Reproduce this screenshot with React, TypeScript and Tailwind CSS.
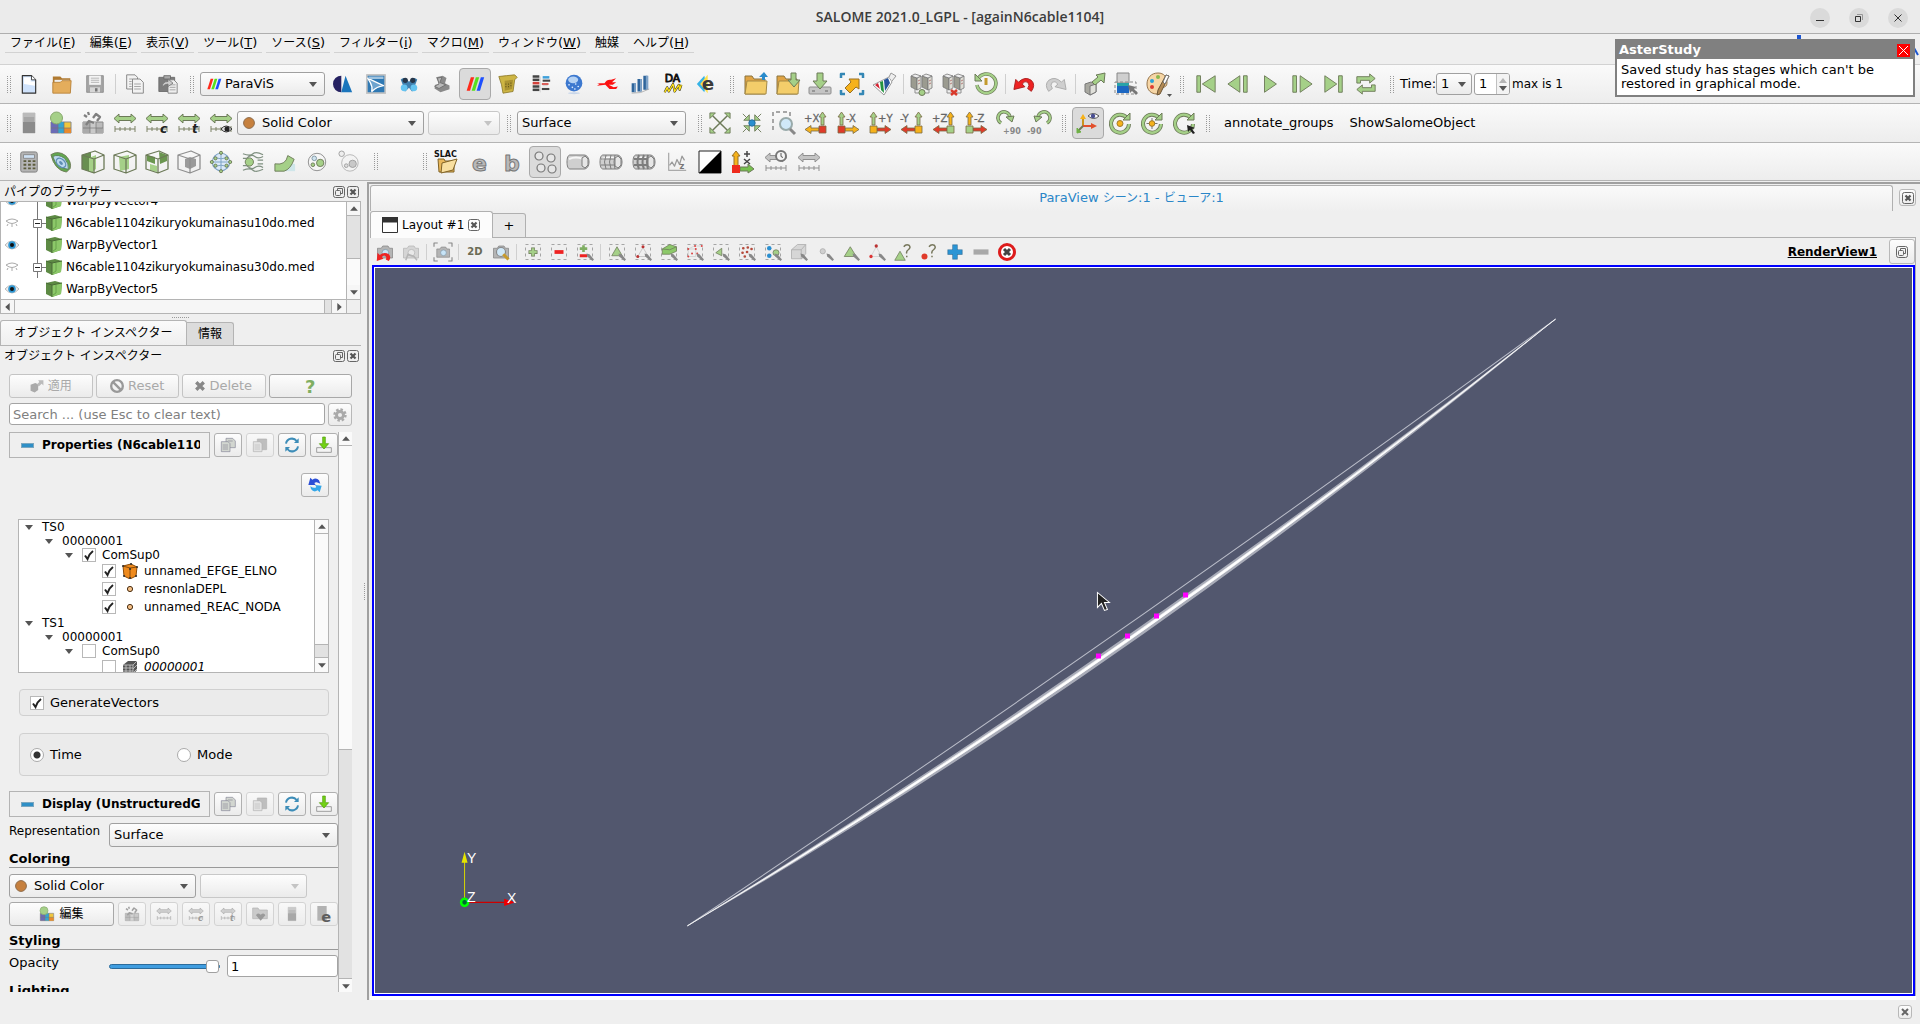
import React, { useState } from "react";

const G = "#a5d088";
const S = "#6c7a58";
const GREY = "#8f8f8f";

type IcoProps = { children: React.ReactNode; size?: string };

const Ico = ({ children, size = "w-6 h-6" }: IcoProps) => (
  <svg viewBox="0 0 24 24" className={`${size} shrink-0 overflow-visible`} fill="none" strokeLinejoin="round">
    {children}
  </svg>
);

const Tool = ({ label, active, children }: { label: string; active?: boolean; children: React.ReactNode }) => (
  <button
    type="button"
    aria-label={label}
    className={`w-8 h-8 shrink-0 flex items-center justify-center rounded-sm border ${
      active ? "bg-[#dbdbdb] border-[#a9a9a9]" : "border-transparent"
    }`}
  >
    {children}
  </button>
);

const Grip = () => (
  <div className="w-4 shrink-0 flex justify-center gap-0.5">
    <div className="h-[17px] border-l border-dotted border-[#999]" />
    <div className="h-[17px] border-l border-dotted border-[#999]" />
  </div>
);

const Sep = () => (
  <div className="w-1.5 shrink-0 flex justify-center">
    <div className="w-px h-5 bg-[#cfcfcf]" />
  </div>
);

const Down = ({ dim }: { dim?: boolean }) => (
  <svg viewBox="0 0 8 5" className="w-2 h-[5px]">
    <path d="M0 0h8L4 5z" fill={dim ? "#c4c4c4" : "#555"} />
  </svg>
);

type ComboProps = { label: string; value: string; width: string; icon?: React.ReactNode; dim?: boolean; pad?: string };

const Combo = ({ label, value, width, icon, dim, pad = "pl-1.5" }: ComboProps) => (
  <div className={`relative ${width}`}>
    <select
      aria-label={label}
      disabled={dim}
      className={`w-full h-6 block appearance-none rounded-[3px] border bg-linear-to-b from-[#fdfdfd] to-[#ebebeb] ${
        dim ? "border-[#c8c8c8]" : "border-[#a0a0a0]"
      } ${icon ? "pl-6" : pad}`}
    >
      <option>{value}</option>
    </select>
    {icon && <span className="absolute left-1.5 top-0 h-6 flex items-center pointer-events-none">{icon}</span>}
    <span className="absolute right-2 top-0 h-6 flex items-center pointer-events-none">
      <Down dim={dim} />
    </span>
  </div>
);

/* ---------- icons ---------- */

const Bars = ({ size }: { size?: string }) => (
  <Ico size={size}>
    <path d="M7 4h4L6 20H2z" fill="#ff2a1a" />
    <path d="M13 4h4l-5 16H8z" fill="#57e01c" />
    <path d="M19 4h4l-5 16h-4z" fill="#1d4fff" />
  </Ico>
);

const Dot = () => (
  <svg viewBox="0 0 12 12" className="w-3 h-3">
    <circle cx="6" cy="6" r="5.4" fill="#c6803e" stroke="#8e6b4a" />
  </svg>
);

const Ruler = ({ mark, grey, eye, clock }: { mark?: string; grey?: boolean; eye?: boolean; clock?: boolean }) => (
  <Ico>
    <path
      d="M1 7.500l5-4.500v2.500h12V3l5 4.500-5 4.500V9.500H6V12z"
      fill={grey ? "#c4c4c4" : G}
      stroke={grey ? GREY : S}
    />
    <path d="M2 21v-6M2 18h20M22 15v6M7 16v4M12 16v4M17 16v4" stroke={grey ? GREY : "#7c8266"} />
    {mark && (
      <text x="15" y="22" fontSize="12" fontStyle="italic" fontWeight="bold" fill={grey ? "#777" : "#222"}>
        {mark}
      </text>
    )}
    {eye && (
      <g>
        <path d="M12 18q5-6 11 0q-6 6-11 0z" fill="#ddd" stroke="#333" />
        <circle cx="18" cy="18" r="2.500" fill="#222" />
      </g>
    )}
    {clock && (
      <g>
        <circle cx="17" cy="6" r="5" fill="#f5f5f5" stroke="#777" strokeWidth="2" />
        <path d="M17 3v3.500l2 1" stroke="#555" />
      </g>
    )}
  </Ico>
);

const Servers = ({ off }: { off?: boolean }) => (
  <Ico>
    {[1, 12].map((x) => (
      <g key={x} stroke="#777" strokeWidth="0.800">
        <path d={`M${x} 4l6 2v12l-6-3z`} fill="#9b9b90" />
        <path d={`M${x + 6} 6l4-2v12l-4 2z`} fill="#deded6" />
        <path d={`M${x} 4l4-2 6 2-4 2z`} fill="#eee" />
        <path d={`M${x + 7} 9l2-1M${x + 7} 12l2-1`} stroke="#a66" />
      </g>
    ))}
    <path d="M5 17v4h14v-4" stroke={GREY} />
    {off ? <path d="M9 18l6 5M15 18l-6 5" stroke="#d8392b" strokeWidth="2.500" /> : <circle cx="12" cy="20.500" r="3" fill={G} stroke={S} />}
  </Ico>
);

const Folder = ({ children }: { children: React.ReactNode }) => (
  <Ico>
    <path d="M1 4h7l2 3h11v15H1z" fill="#e0a445" stroke="#8a7440" />
    <path d="M3 9h20l-1 13H1z" fill="#f3cd6a" stroke="#a58a45" />
    {children}
  </Ico>
);

type AxisProps = { text: string; up: string; box: string; side: string; left?: boolean };

const Axis = ({ text, up, box, side, left }: AxisProps) => (
  <Ico>
    <g transform={left ? "translate(24 0) scale(-1 1)" : undefined} stroke="#7a6a45" strokeWidth="0.800">
      <path d="M4 14V6H2l3.500-5L9 6H7v8z" fill={up} />
      <path d="M9 17h8v-2.500l6 4-6 4V20H9z" fill={side} />
      <path d="M2 15h7v7H2z" fill={box} />
    </g>
    <text x={left ? 0 : 10} y="11" fontSize="10" fill="#666" stroke="#666" strokeWidth="0.300">
      {text}
    </text>
  </Ico>
);

const Rot = ({ text, flip }: { text: string; flip?: boolean }) => (
  <Ico>
    <g transform={flip ? "translate(24 0) scale(-1 1)" : undefined}>
      <path d="M5 12a6 6 0 1 1 9-5" stroke={S} strokeWidth="3.600" />
      <path d="M5 12a6 6 0 1 1 9-5" stroke={G} strokeWidth="2" />
      <path d="M10 6l8-1-2 6z" fill={G} stroke={S} />
    </g>
    <text x={flip ? -1 : 7} y="23" fontSize="8" fontWeight="bold" fill="#888">
      {text}
    </text>
  </Ico>
);

const Cycle = ({ kind }: { kind: "dot" | "plus" | "pick" }) => (
  <Ico>
    <path d="M19 7a9 9 0 1 0 2 6" stroke={S} strokeWidth="4" />
    <path d="M19 7a9 9 0 1 0 2 6" stroke={G} strokeWidth="2.400" />
    <path d="M22 2v7h-7z" fill={G} stroke={S} />
    {kind === "dot" && <circle cx="12" cy="12.500" r="3" fill="#f6b21b" stroke="#a07a2a" />}
    {kind === "plus" && (
      <g>
        <path d="M12 7v11M6.500 12.500h11" stroke="#777" />
        <circle cx="12" cy="12.500" r="2.800" fill="#f6b21b" stroke="#a07a2a" />
      </g>
    )}
    {kind === "pick" && <path d="M15 14l8 3-3 1 3 4-2 1-3-4-2 2z" fill="#222" />}
  </Ico>
);

const Box = ({ children, grey }: { children?: React.ReactNode; grey?: boolean }) => (
  <Ico>
    {children}
    <path
      d="M1 5l13-4 9 4v14l-10 4-12-4zM1 5l12 4 10-4M13 9v14"
      stroke={grey ? GREY : S}
      strokeWidth="1.300"
    />
  </Ico>
);

const Sel = ({ children, bare }: { children?: React.ReactNode; bare?: boolean }) => (
  <Ico size="w-[18px] h-[18px]">
    {!bare && <rect x="2" y="2" width="20" height="20" stroke="#9c9c9c" strokeDasharray="4 4" strokeWidth="1.200" />}
    {children}
  </Ico>
);

const Pick = () => <path d="M14 14l4 1 6 7-2 2-7-6z" fill="#888" />;

const CamBody = ({ grey }: { grey?: boolean }) => (
  <g>
    <path d="M2 7h5l2-3h7l2 3h4v13H2z" fill={grey ? "#d5d5d5" : "#b4b4b4"} stroke={grey ? "#b5b5b5" : "#858585"} />
    <circle cx="12.500" cy="13" r="4.500" fill={grey ? "#e9e9e9" : "#c7e4f7"} stroke={grey ? "#b5b5b5" : "#7f96a5"} />
  </g>
);

const Tank = ({ lines }: { lines: number }) => (
  <Ico>
    <path d="M4 5h14c3 0 5 3 5 7s-2 7-5 7H4c-2 0-3-3-3-7s1-7 3-7z" fill="#cfcfcf" stroke="#7d7d7d" />
    <path d="M3 9q7-3 14 0" stroke="#f6f6f6" strokeWidth="2" />
    <path d="M16 8l3-2 3 3v6l-3 3-3-2z" fill="#e6e6e6" stroke="#7d7d7d" />
    {lines > 0 && <path d="M7 5q-3 7 0 14M12 5q-3 7 0 14M2 9h14M2 15h14M16 5q-2 7 0 14" stroke="#7d7d7d" strokeWidth={lines} />}
  </Ico>
);

const Legend = ({ grey }: { grey?: boolean }) => (
  <Ico>
    <path d="M2 11h20v11H2z" fill={grey ? "#bbb" : "#f0c63c"} stroke="#888" />
    <path d="M2 11h7v11H2z" fill={grey ? "#aaa" : "#6b6bb5"} />
    <path d="M9 11h6v11H9z" fill={grey ? "#c9c9c9" : "#37a4cf"} />
    <path d="M15 17h7v5h-7z" fill={grey ? "#aaa" : "#e98a2c"} />
    <path d="M2 17h20M9 11v11M15 11v11" stroke="#777" strokeWidth="0.700" />
    {grey ? (
      <path d="M5 14l3-4 5 2M12 7l3-4 4 3-3 4M3 4l3 2M7 1l1 3" stroke="#808080" strokeWidth="2.300" />
    ) : (
      <circle cx="7.500" cy="7" r="6" fill={G} stroke="#87a86c" />
    )}
  </Ico>
);

const Scheme = () => (
  <Ico>
    <path d="M6 2h12v20H6z" fill="#a6a6a6" stroke="#c6c6c6" />
    <path d="M6 11h12v11H6z" fill="#8b8b8b" />
    <path d="M6 2h12v4H6z" fill="#bbb" />
  </Ico>
);

const CubeSmall = () => (
  <svg viewBox="0 0 16 16" className="w-4 h-4 shrink-0">
    <path d="M0 2l9-2 7 2-1 11-9 3-6-3z" fill="#5d8a44" />
    <path d="M6 4l10-2-1 11-9 3z" fill="#8cc869" />
    <path d="M0 2l6 2v12M6 4l10-2" stroke="#4a6b38" fill="none" />
    <path d="M10 4v8l-3 2" stroke="#5f9a44" fill="none" strokeWidth="0.800" />
  </svg>
);

const Float = () => (
  <svg viewBox="0 0 12 12" className="w-3 h-3" fill="none" stroke="#666">
    <rect x="0.500" y="0.500" width="11" height="11" rx="2" />
    <rect x="2.500" y="4.500" width="5" height="5" rx="1" />
    <path d="M4.500 4V2.500h5v5H8" />
  </svg>
);

const Close = () => (
  <svg viewBox="0 0 12 12" className="w-3 h-3" fill="none" stroke="#666">
    <rect x="0.500" y="0.500" width="11" height="11" rx="2" />
    <path d="M3.500 3.500l5 5M8.500 3.500l-5 5" strokeWidth="2.200" stroke="#555" />
  </svg>
);

/* ---------- top of the window ---------- */

const menus = [
  ["ファイル", "F"],
  ["編集", "E"],
  ["表示", "V"],
  ["ツール", "T"],
  ["ソース", "S"],
  ["フィルター", "i"],
  ["マクロ", "M"],
  ["ウィンドウ", "W"],
  ["触媒", ""],
  ["ヘルプ", "H"],
];

const TitleBar = () => (
  <header className="relative h-[34px] shrink-0 border-b border-[#aeaeae] bg-[#ebebeb] flex items-center justify-center">
    <h1 className="font-['Open_Sans',sans-serif] font-semibold text-[14px] text-[#3d3d3d]">
      SALOME 2021.0_LGPL - [againN6cable1104]
    </h1>
    <div className="absolute right-3 top-2 flex gap-[19px]">
      <button aria-label="Minimize" className="w-5 h-5 rounded-full bg-[#dadada] flex items-center justify-center">
        <svg viewBox="0 0 10 10" className="w-2.5 h-2.5" stroke="#333"><path d="M1 7.500h8" /></svg>
      </button>
      <button aria-label="Restore" className="w-5 h-5 rounded-full bg-[#dadada] flex items-center justify-center">
        <svg viewBox="0 0 10 10" className="w-2.5 h-2.5" stroke="#333" fill="none">
          <path d="M1.500 3.500h5v5h-5z" />
          <path d="M3 1.500h5.500V7" stroke="#999" />
        </svg>
      </button>
      <button aria-label="Close" className="w-5 h-5 rounded-full bg-[#dadada] flex items-center justify-center">
        <svg viewBox="0 0 10 10" className="w-2.5 h-2.5" stroke="#333"><path d="M1.500 1.500l7 7M8.500 1.500l-7 7" /></svg>
      </button>
    </div>
  </header>
);

const MenuBar = () => (
  <nav className="h-[31px] shrink-0 border-b border-[#d2d2d2] flex gap-1 pl-[5px] items-start">
    {menus.map(([name, key]) => (
      <button key={name} className="h-[19px] px-[5px] border-b border-[#d2d2d2] flex items-center whitespace-nowrap">
        <span className="text-[12px]">{name}</span>
        {key && (
          <span className="text-[13px]">
            (<u>{key}</u>)
          </span>
        )}
      </button>
    ))}
    <svg viewBox="0 0 130 22" className="ml-auto w-[130px] h-[22px]" fill="none">
      <path d="M7 1h4v4H7z" fill="#1c55d0" />
      <path d="M124 14l4 7" stroke="#1c55d0" strokeWidth="2" />
    </svg>
  </nav>
);

const bar = "shrink-0 border-b border-[#b4b4b4] bg-linear-to-b from-[#fafafa] to-[#ededed] flex items-center pl-px";

const FileBar = () => (
  <div className={`${bar} h-[39px]`}>
    <Grip />
    <div className="flex gap-px -ml-1">
      <Tool label="New">
        <Ico size="w-5 h-5">
          <path d="M4 2h11l5 5v16H4z" fill="#cfe2fb" stroke="#333" strokeWidth="1.400" />
          <path d="M6 4h8v5h5v5L6 12z" fill="#fff" />
          <path d="M15 2v5h5" fill="#fff" stroke="#333" />
        </Ico>
      </Tool>
      <Tool label="Open">
        <Ico size="w-5 h-5">
          <path d="M1 3h9l2 2h10v17H1z" fill="#b07a30" />
          <path d="M3 7h18v6H3z" fill="#eee" />
          <path d="M1 10h9l2-2h11l-1 15H1z" fill="#e4ad5c" stroke="#b68036" />
        </Ico>
      </Tool>
      <Tool label="Save">
        <Ico size="w-5 h-5">
          <path d="M2 2h20v20H2z" fill="#a5a5a5" stroke="#8a8a8a" />
          <path d="M5 2h14v11H5z" fill="#f4f4f4" />
          <path d="M7 5h10M7 7.500h10M7 10h10" stroke="#aaa" />
          <path d="M6 16h12v6H6z" fill="#d6d6d6" />
          <path d="M12 17h3v4h-3z" fill="#777" />
        </Ico>
      </Tool>
    </div>
    <div className="w-2 flex justify-center"><div className="w-px h-5 bg-[#cfcfcf]" /></div>
    <div className="flex gap-px">
      <Tool label="Copy">
        <Ico size="w-5 h-5">
          <path d="M2 1h10l3 3v14H2z" fill="#f2f2f2" stroke="#777" />
          <path d="M9 6h9l4 4v13H9z" fill="#f2f2f2" stroke="#777" />
          <path d="M5 6h4M5 9h3M5 12h3M5 15h3M11 12h8M11 15h8M11 18h8" stroke="#999" />
        </Ico>
      </Tool>
      <Tool label="Paste">
        <Ico size="w-5 h-5">
          <path d="M1 4h19v17H1z" fill="#7d7d7d" stroke="#666" />
          <path d="M7 2h8v4H7z" fill="#aaa" stroke="#666" />
          <path d="M12 7h7l4 4v12H12z" fill="#eee" stroke="#777" />
          <path d="M14 13h7M14 16h7M14 19h7" stroke="#999" />
          <path d="M5 16q0-7 7-7V6l6 5-6 4v-3q-4 0-7 4z" fill="#ccc" stroke="#777" />
        </Ico>
      </Tool>
    </div>
    <Grip />
    <Combo label="Module" value="ParaViS" width="w-[125px]" icon={<Bars size="w-4 h-4" />} />
    <div className="flex gap-px ml-0.5">
      <Tool label="Shaper">
        <Ico size="w-5 h-5">
          <path d="M10 2v20A10 10 0 0 1 10 2z" fill="#262262" />
          <path d="M15 2l8 20H10z" fill="#1b75bc" />
        </Ico>
      </Tool>
      <Tool label="Geometry">
        <Ico size="w-5 h-5">
          <rect x="1" y="1" width="22" height="22" fill="#2f79b4" stroke="#c4c4c4" strokeWidth="2" />
          <path d="M2 5q8 4 19 9-8 1-14 7 1-6-2-11z" fill="#6ea4cf" stroke="#fff" strokeWidth="1.500" />
          <path d="M3 3h18v3H3z" fill="#9fc3df" />
        </Ico>
      </Tool>
      <Tool label="Mesh">
        <Ico size="w-[18px] h-[18px]">
          <path d="M1 6q4-4 8 0l3 3 3-3q4-4 8 0l-3 8 2 5-6 3-4-5-5 5-5-3 2-5z" fill="#3f7fae" />
          <circle cx="5.500" cy="17" r="4.500" fill="#64c4f1" />
          <circle cx="18.500" cy="17" r="4.500" fill="#64c4f1" />
          <circle cx="7" cy="7" r="3.500" fill="#27374a" />
          <circle cx="17" cy="7" r="3.500" fill="#27374a" />
        </Ico>
      </Tool>
      <Tool label="Fields">
        <Ico size="w-[18px] h-[18px]">
          <path d="M4 3l9-2 5 3-2 7 6 3v5l-12 4-8-5 1-5 5-1z" fill="#8a8a8a" />
          <path d="M6 4l6-1-3 7 8 3-9 5-6-3 6-3z" fill="#b9b9b9" stroke="#666" />
        </Ico>
      </Tool>
      <Tool label="ParaViS" active><Bars size="w-5 h-5" /></Tool>
      <Tool label="Script">
        <Ico size="w-5 h-5">
          <path d="M1 3q9-1 19-2l3 3-3 3-2 14-12 2q-1-10-5-20z" fill="#cdb544" stroke="#8d7a2a" />
          <path d="M8 8l10-1-1 11-9 2z" fill="#ab9332" />
          <path d="M9 12h1M12 12h1M15 11h1M9 15h1M12 15h1M15 14h1" stroke="#5d5018" strokeWidth="1.500" />
        </Ico>
      </Tool>
      <Tool label="YACS">
        <Ico size="w-5 h-5">
          <path d="M11 3v19M14 8h8M14 14h6" stroke="#c9c9c9" />
          {[3, 7, 11, 15, 19].map((y, i) => <path key={y} d={`M2 ${y}h8`} stroke={i === 2 ? "#d3413b" : "#444"} strokeWidth="3" />)}
          <path d="M14 4h8" stroke="#3fa0da" strokeWidth="3" />
          <path d="M14 8h9" stroke="#444" strokeWidth="2.500" />
          <path d="M13 12h8" stroke="#d3413b" strokeWidth="2" />
          <path d="M13 18h9" stroke="#444" strokeWidth="2.500" />
        </Ico>
      </Tool>
      <Tool label="Network">
        <Ico size="w-5 h-5">
          <circle cx="12" cy="11" r="10" fill="#3c78cf" />
          <ellipse cx="11" cy="7" rx="6" ry="4" fill="#b5d2f3" />
          <path d="M6 13h.1M10 16h.1M14 12h.1M17 15h.1M13 18h.1" stroke="#dcebff" strokeWidth="2" strokeLinecap="round" />
          <ellipse cx="12" cy="23" rx="7" ry="1.200" fill="#c8d6ea" />
        </Ico>
      </Tool>
      <Tool label="Homard">
        <Ico size="w-5 h-5">
          <path d="M0 11l9 0q3-5 8-4l6-2-5 5 5 0-4 3-5 0 6 3 5-1-2 3-8 0-5-5-10 1 3-2z" fill="#fb1111" />
        </Ico>
      </Tool>
      <Tool label="Statistics">
        <Ico size="w-5 h-5">
          <path d="M2 11h5v11H2zM9 6h5v15H9zM16 2h5v17h-5z" fill="#2f659b" />
          <path d="M5 11h2v11H5zM12 6h2v15h-2zM19 2h3v17h-3z" fill="#7fa3c8" />
          <path d="M2 23q11 1 21-5" stroke="#aaa" />
        </Ico>
      </Tool>
      <Tool label="Data">
        <Ico size="w-5 h-5">
          <text x="2" y="10" fontSize="13" fill="#111" stroke="#111">DA</text>
          <path d="M2 22l3-6 2 5 5-9 2 9 5-8 1 6 2-6" stroke="#222" strokeWidth="2.600" />
          <path d="M2 22l3-6 2 5 5-9 2 9 5-8 1 6 2-6" stroke="#ffe21a" strokeWidth="1.600" />
        </Ico>
      </Tool>
      <Tool label="AsterStudy">
        <Ico size="w-5 h-5">
          <path d="M10 2L1 12l9 10 2-10z" fill="#35b3e6" />
          <path d="M14 1L5 12l9 11z" fill="#ffe04a" />
          <text x="7" y="19" fontSize="22" fontWeight="bold" fill="#3a3a3a">e</text>
        </Ico>
      </Tool>
    </div>
    <div className="w-0.5" />
    <Grip />
    <Tool label="Load"><Folder><path d="M18 8V5h-3l5-5 4 5h-3v3z" fill="#2a8bcb" /></Folder></Tool>
    <Tool label="Load state"><Folder><path d="M15 1h5v7h4l-6 7-6-7h3z" fill={G} stroke={S} /></Folder></Tool>
    <Tool label="Save data">
      <Ico>
        <rect x="1" y="15" width="22" height="7" rx="1" fill="#c4c4c4" stroke="#8e8e8e" />
        <path d="M9 1h6v8h4l-7 8-7-8h4z" fill={G} stroke={S} />
        <path d="M4 19h3M17 19h3" stroke="#666" />
      </Ico>
    </Tool>
    <Tool label="Extract">
      <Ico>
        <path d="M1 6V2h4M19 2h4v4M1 18v4h4M23 18v4h-4" stroke="#3487b5" strokeWidth="2.500" />
        <path d="M5 16l6-6-2-3h10v10l-3-2-6 6z" fill="#f6b21b" stroke="#977028" />
      </Ico>
    </Tool>
    <Tool label="Catalyst">
      <Ico>
        <path d="M1 13l16-8 3 5-8 13z" fill="#fff" stroke="#999" />
        <path d="M3 13l3-2 2 6z" fill="#d3202f" />
        <path d="M8 10l3-1 1 12-3-3z" fill="#23923f" />
        <path d="M12 8l4-2 2 5-5 8z" fill="#24539c" />
        <path d="M17 5l2-4 5 3-4 5" fill="#eee" stroke="#999" />
      </Ico>
    </Tool>
    <Sep />
    <Tool label="Connect"><Servers /></Tool>
    <Tool label="Disconnect"><Servers off /></Tool>
    <Tool label="Reload">
      <Ico>
        <path d="M4 7a9.500 9.500 0 1 1-1 6" stroke={S} strokeWidth="3.600" />
        <path d="M4 7a9.500 9.500 0 1 1-1 6" stroke={G} strokeWidth="2.200" />
        <path d="M1 2v7h7z" fill={G} stroke={S} />
        <path d="M12 6v7" stroke="#c39a2c" strokeWidth="3" />
      </Ico>
    </Tool>
    <Sep />
    <Tool label="Undo">
      <Ico size="w-[22px] h-[22px]"><path d="M1 18L3 7l3 3q7-7 14-2 5 5 0 12l-4-3q3-4 0-7-3-2-6 2l3 3z" fill="#ee2222" stroke="#aa1a1a" /></Ico>
    </Tool>
    <Tool label="Redo">
      <Ico size="w-[22px] h-[22px]"><path d="M23 18L21 7l-3 3q-7-7-14-2-5 5 0 12l4-3q-3-4 0-7 3-2 6 2l-3 3z" fill="#cfcfcf" stroke="#a9a9a9" /></Ico>
    </Tool>
    <Sep />
    <Tool label="Apply">
      <Ico>
        <path d="M3 12l6-2 5 2v8l-6 3-5-3z" fill="#a8a8a0" stroke="#777" />
        <path d="M8 14l6-2v8l-6 3z" fill="#e0e0da" stroke="#777" />
        <path d="M10 10l6-5-2-2 9-2-1 10-3-3-6 5z" fill={G} stroke={S} />
      </Ico>
    </Tool>
    <Tool label="Colour by selection">
      <Ico>
        <path d="M3 1h12v10H3z" fill="#cfcfcf" stroke="#888" />
        <path d="M3 11h12v4H3z" fill="#29a3a8" />
        <path d="M3 14h12v7H3z" fill="#1c67c2" />
        <rect x="1" y="10" width="21" height="12" stroke="#888" strokeDasharray="3 2" />
        <path d="M14 13l8 2-2 2 4 4-2 2-4-4-2 2z" fill="#777" />
      </Ico>
    </Tool>
    <Tool label="Palette">
      <Ico>
        <path d="M12 1C5 1 1 6 1 12s4 10 10 10c3 0 2-3 2-5s8 0 8-6S18 1 12 1z" fill="#f6d6a6" stroke="#96744a" />
        <circle cx="6" cy="9" r="2" fill="#29a3d9" /><circle cx="12" cy="5" r="2" fill="#8ab84c" /><circle cx="6" cy="15" r="2" fill="#e03e32" />
        <path d="M20 3l3 1-9 18-3 1 1-5z" fill="#b28a55" stroke="#6d5636" />
        <path d="M20 3l3 1-4 8-2-2z" fill="#fff" stroke="#777" />
        <path d="M21 22h5l-2.500 3z" fill="#555" />
      </Ico>
    </Tool>
    <Grip />
    <Tool label="First"><Ico size="w-[22px] h-[22px]"><path d="M2 3h4v18H2zM22 3v18L8 12z" fill={G} stroke={S} /></Ico></Tool>
    <Tool label="Previous"><Ico size="w-[22px] h-[22px]"><path d="M18 3h4v18h-4zM14 3v18L1 12z" fill={G} stroke={S} /></Ico></Tool>
    <Tool label="Play"><Ico size="w-[22px] h-[22px]"><path d="M6 3v18l13-9z" fill={G} stroke={S} /></Ico></Tool>
    <Tool label="Next"><Ico size="w-[22px] h-[22px]"><path d="M2 3h4v18H2zM10 3v18l13-9z" fill={G} stroke={S} /></Ico></Tool>
    <Tool label="Last"><Ico size="w-[22px] h-[22px]"><path d="M17 3h4v18h-4zM2 3v18l13-9z" fill={G} stroke={S} /></Ico></Tool>
    <Tool label="Loop">
      <Ico size="w-[22px] h-[22px]">
        <path d="M2 11V4h14V1l6 5-6 5V8H6v3z" fill={G} stroke={S} />
        <path d="M22 13v7H8v3l-6-5 6-5v3h10v-3z" fill={G} stroke={S} />
      </Ico>
    </Tool>
    <div className="w-0.5" />
    <Grip />
    <label htmlFor="time" className="w-9 text-[13px]">Time:</label>
    <div className="relative">
      <select id="time" className="w-9 h-[22px] block appearance-none rounded-[3px] border border-[#a0a0a0] pl-1 text-[13px] bg-linear-to-b from-[#fdfdfd] to-[#ebebeb]">
        <option>1</option>
      </select>
      <span className="absolute right-1.5 top-0 h-[22px] flex items-center pointer-events-none"><Down /></span>
    </div>
    <div className="ml-0.5 flex w-9 h-[22px] rounded-[3px] border border-[#a0a0a0] overflow-hidden bg-white">
      <input aria-label="Step" defaultValue="1" className="w-[21px] pl-1 text-[13px]" />
      <div className="flex-1 border-l border-[#c0c0c0] bg-[#f3f3f3] flex flex-col items-center justify-center gap-[3px]">
        <svg viewBox="0 0 8 5" className="w-2 h-[5px]"><path d="M0 5h8L4 0z" fill="#b4b4b4" /></svg>
        <svg viewBox="0 0 8 5" className="w-2 h-[5px]"><path d="M0 0h8L4 5z" fill="#555" /></svg>
      </div>
    </div>
    <span className="pl-0.5 text-[12px]">max is 1</span>
  </div>
);

const ViewBar = () => (
  <div className={`${bar} h-[39px]`}>
    <Grip />
    <div className="flex -ml-1">
      <Tool label="Legend"><Scheme /></Tool>
      <Tool label="Edit map"><Legend /></Tool>
      <Tool label="Unlink map"><Legend grey /></Tool>
      <Tool label="Rescale"><Ruler /></Tool>
      <Tool label="Rescale custom"><Ruler mark="c" /></Tool>
      <Tool label="Rescale time"><Ruler mark="t" /></Tool>
      <Tool label="Rescale visible"><Ruler eye /></Tool>
    </div>
    <Combo label="Colour" value="Solid Color" width="w-[187px]" icon={<Dot />} />
    <div className="w-1" />
    <Combo label="Component" value="" width="w-[72px]" dim />
    <div className="w-px" />
    <Grip />
    <Combo label="Representation" value="Surface" width="w-[169px]" pad="pl-1" />
    <div className="w-1.5" />
    <Grip />
    <div className="flex -ml-1">
      <Tool label="Reset camera">
        <Ico size="w-[22px] h-[22px]">
          <path d="M4 4l16 16M20 4L4 20" stroke={S} strokeWidth="1.600" />
          <path d="M1 1h6L1 7zM23 1v6l-6-6zM1 23v-6l6 6zM23 23h-6l6-6z" fill={G} stroke={S} />
        </Ico>
      </Tool>
      <Tool label="Zoom to data">
        <Ico size="w-[22px] h-[22px]">
          <path d="M2 2l20 20M22 2L2 22" stroke={S} />
          <path d="M9 3v6H3zM15 3v6h6zM9 21v-6H3zM15 21v-6h6z" fill={G} stroke={S} />
          <circle cx="12" cy="12" r="3.500" fill="#2a8fd0" stroke="#256a94" />
        </Ico>
      </Tool>
      <Tool label="Zoom to box">
        <Ico>
          <path d="M1 19V1h17v5" stroke="#8c8c8c" strokeDasharray="4 3" strokeWidth="1.500" />
          <circle cx="14" cy="13" r="6" fill="#cfe8f8" stroke="#9aa" strokeWidth="2" />
          <path d="M18 18l5 5" stroke="#888" strokeWidth="3" />
        </Ico>
      </Tool>
      <Tool label="+X"><Axis text="+X" up={G} box="#df3b2a" side="#f6b21b" left /></Tool>
      <Tool label="-X"><Axis text="-X" up={G} box="#df3b2a" side="#f6b21b" /></Tool>
      <Tool label="+Y"><Axis text="+Y" up={G} box="#f6b21b" side="#df3b2a" /></Tool>
      <Tool label="-Y"><Axis text="-Y" up={G} box="#f6b21b" side="#df3b2a" left /></Tool>
      <Tool label="+Z"><Axis text="+Z" up="#f6b21b" box={G} side="#df3b2a" left /></Tool>
      <Tool label="-Z"><Axis text="-Z" up="#f6b21b" box={G} side="#df3b2a" /></Tool>
      <Tool label="Rotate +90"><Rot text="+90" /></Tool>
      <Tool label="Rotate -90"><Rot text="-90" flip /></Tool>
    </div>
    <Grip />
    <Tool label="Orientation axes" active>
      <Ico>
        <path d="M7 15V7" stroke="#c9951d" strokeWidth="2" /><path d="M4 8l3-5 3 5z" fill="#f6b21b" />
        <path d="M7 15h9" stroke="#e2502d" strokeWidth="2" /><path d="M15 12l6 3-6 3z" fill="#e2502d" />
        <path d="M7 15l-4 4" stroke={S} strokeWidth="2" /><path d="M1 17l4 4-4 1z" fill="#6fb046" stroke="#6fb046" />
        <path d="M12 5q5-5 11 0-5 5-11 0z" fill="#fff" stroke="#555" /><circle cx="17" cy="5" r="2.200" fill="#4a4f92" />
      </Ico>
    </Tool>
    <Tool label="Show center"><Cycle kind="dot" /></Tool>
    <Tool label="Reset center"><Cycle kind="plus" /></Tool>
    <Tool label="Pick center"><Cycle kind="pick" /></Tool>
    <Grip />
    <button className="ml-2 text-[13px]">annotate_groups</button>
    <button className="ml-4 text-[13px]">ShowSalomeObject</button>
  </div>
);

const FilterBar = () => (
  <div className={`${bar} h-[38px]`}>
    <Grip />
    <div className="flex -ml-1">
      <Tool label="Calculator">
        <Ico size="w-[22px] h-[22px]">
          <rect x="3" y="1" width="18" height="22" rx="2" fill="#b4b4b4" stroke="#7a7a7a" />
          <rect x="6" y="4" width="12" height="4" fill="#cfe2f5" stroke="#888" />
          {[11, 15, 19].map((y) => <path key={y} d={`M6 ${y}h3M11 ${y}h3M16 ${y}h3`} stroke="#5c5c3c" strokeWidth="2" />)}
        </Ico>
      </Tool>
      <Tool label="Contour">
        <Ico size="w-[22px] h-[22px]">
          <path d="M1 4q8-5 16 1 7 7 5 14l-4 4Q5 21 1 4z" fill="#62a84e" stroke={S} />
          <path d="M3 6q6-3 13 2 5 6 4 12Q7 19 3 6z" fill="#bcd9ef" stroke="#5b7f58" />
          <ellipse cx="12" cy="13" rx="6" ry="4" transform="rotate(45 12 13)" stroke="#5f8fb4" strokeWidth="1.400" />
          <ellipse cx="12" cy="13" rx="2.500" ry="1.500" transform="rotate(45 12 13)" fill="#5f8fb4" />
        </Ico>
      </Tool>
      <Tool label="Clip"><Box><path d="M1 5l9-3v16l3 5-12-4z" fill="#688f50" /><path d="M8 8l7-3v14l-4 3-3-1z" fill={G} /></Box></Tool>
      <Tool label="Slice"><Box><path d="M6 7l10-2v14l-9 2z" fill={G} /></Box></Tool>
      <Tool label="Threshold"><Box><path d="M2 5l8 2v7l-8-3zM14 2l8 3v6l-7 3z" fill="#6a964f" /><path d="M5 14l7 2v6l-7-2z" fill={G} /></Box></Tool>
      <Tool label="Extract subset"><Box grey><path d="M8 9l5-2 6 2v7l-6 3-5-2z" fill="#9a9a9a" /></Box></Tool>
      <Tool label="Glyph">
        <Ico size="w-[22px] h-[22px]">
          <circle cx="12" cy="12" r="9.500" fill="#dbe9f7" stroke="#7aa0c4" strokeWidth="1.200" />
          <path d="M3 12h18M12 2v20M5 6q7 5 14 0M5 18q7-5 14 0" stroke="#7aa0c4" />
          {[[12, 2], [12, 22], [2, 12], [22, 12], [6, 8], [18, 8], [6, 16], [18, 16]].map(([x, y]) => (
            <circle key={`${x}-${y}`} cx={x} cy={y} r="1.700" fill={G} stroke={S} />
          ))}
        </Ico>
      </Tool>
      <Tool label="Streamlines">
        <Ico size="w-[22px] h-[22px]">
          <path d="M1 3q8 3 11 0t11 1M1 8h4q5-5 9-2t9 0M1 16h4q5 5 9 2t9 0M1 21q8-3 11 0t11-1M17 10h6M17 14h6" stroke="#7f9080" strokeWidth="1.300" />
          <circle cx="8" cy="12" r="4.500" fill={G} stroke={S} />
        </Ico>
      </Tool>
      <Tool label="Warp">
        <Ico size="w-[22px] h-[22px]">
          <path d="M1 14h22v8H1z" fill="#cfe6ea" />
          <path d="M1 14q12 2 14-9l7 4Q18 20 11 22H1z" fill={G} stroke={S} />
        </Ico>
      </Tool>
      <Tool label="Group">
        <Ico size="w-[22px] h-[22px]">
          <circle cx="12" cy="12" r="9.500" fill="#f6f6f6" stroke="#8a8a8a" />
          <circle cx="15.500" cy="13" r="4" fill={G} stroke={S} />
          <circle cx="9" cy="8" r="2.500" fill="#cfe3ee" stroke="#7e95a3" /><circle cx="7.500" cy="15" r="2" fill={G} stroke={S} />
        </Ico>
      </Tool>
      <Tool label="Extract block">
        <Ico size="w-[22px] h-[22px]">
          <circle cx="13" cy="13" r="9" fill="#f3f3f3" stroke="#b5b5b5" />
          <circle cx="16" cy="14" r="4" fill="#c8c8c8" stroke="#9d9d9d" />
          <circle cx="4" cy="3" r="3" fill="#eee" stroke="#9d9d9d" /><circle cx="9" cy="16" r="2" fill="#ddd" stroke="#9d9d9d" />
        </Ico>
      </Tool>
    </div>
    <div className="w-[3px]" />
    <Grip />
    <div className="w-[33px]" />
    <Grip />
    <div className="flex gap-px -ml-[3px]">
      <Tool label="SLAC">
        <Ico>
          <path d="M4 9h6l1 2h9v11H5z" fill="#e8b75b" stroke="#806225" />
          <path d="M8 13l15-4-4 11-12 3z" fill="#f8dfa0" stroke="#806225" />
          <text x="0" y="7" fontSize="8" fontWeight="bold" fill="#111">SLAC</text>
        </Ico>
      </Tool>
      <Tool label="E field"><Ico><text x="5" y="21" fontSize="22" fontWeight="bold" fill="#b9b9b9" stroke="#777">e</text></Ico></Tool>
      <Tool label="B field"><Ico><text x="4" y="21" fontSize="22" fontWeight="bold" fill="#b9b9b9" stroke="#777">b</text></Ico></Tool>
      <Tool label="Particles" active>
        <Ico>
          {[[6, 6], [18, 8], [8, 18], [19, 19]].map(([x, y]) => <circle key={x} cx={x} cy={y} r="4" fill="#e6e6e6" stroke="#777" strokeWidth="1.200" />)}
        </Ico>
      </Tool>
      <Tool label="Solid mesh"><Tank lines={0} /></Tool>
      <Tool label="Wireframe mesh"><Tank lines={1} /></Tool>
      <Tool label="Back mesh"><Tank lines={2} /></Tool>
      <Tool label="Plot">
        <Ico size="w-5 h-5">
          <path d="M2 1v21h21" stroke="#aaa" strokeWidth="1.500" />
          <path d="M3 16l3-4 3 5 3-8 3 6 3-10 3 5" stroke="#999" strokeWidth="1.500" />
          <text x="15" y="20" fontSize="10" fontWeight="bold" fill="#777">z</text>
        </Ico>
      </Tool>
      <Tool label="Background">
        <Ico>
          <path d="M1 1h22v22H1z" fill="#fff" stroke="#222" />
          <path d="M23 1v22H1z" fill="#000" />
        </Ico>
      </Tool>
      <Tool label="Align">
        <Ico>
          <path d="M3 16V6H1l4-5 4 5H7v10z" fill="#f6b21b" stroke="#977028" />
          <path d="M9 17h8v-3l6 5-6 4v-2H9z" fill="#76c04e" stroke={S} />
          <path d="M1 15h8v8H1z" fill="#ee2a1c" />
          <path d="M13 4h6M16 1v6M13 9l6 5M19 9l-6 5" stroke="#444" strokeWidth="1.500" />
        </Ico>
      </Tool>
      <Tool label="Range over time"><Ruler grey clock /></Tool>
      <Tool label="Range"><Ruler grey /></Tool>
    </div>
  </div>
);

const Popup = () => (
  <div className="absolute right-[5px] top-[39px] w-[300px] border-2 border-[#808080] bg-white" role="alert">
    <div className="h-[18px] bg-[#808080] flex items-center justify-between pl-0.5 pr-[3px] text-white font-bold text-[13px]">
      AsterStudy
      <button aria-label="Dismiss" className="w-[13px] h-[13px] bg-[#f00]">
        <svg viewBox="0 0 13 13" className="w-full h-full" stroke="#fff"><path d="M2 2l9 9M11 2l-9 9" /></svg>
      </button>
    </div>
    <p className="px-1 pt-1 pb-1 text-[13px] leading-[14px] h-9">Saved study has stages which can't be restored in graphical mode.</p>
  </div>
);

/* ---------- left docks ---------- */

const DockTitle = ({ children }: { children: React.ReactNode }) => (
  <div className="h-[18px] shrink-0 flex items-center justify-between pl-1 pr-0.5">
    <h2 className="text-[12px]">{children}</h2>
    <div className="flex gap-0.5">
      <button aria-label="Float" className="flex"><Float /></button>
      <button aria-label="Close dock" className="flex"><Close /></button>
    </div>
  </div>
);

const Arrow = ({ dir }: { dir: "up" | "down" | "left" | "right" }) => {
  const d = { up: "M1 6h7L4.500 2z", down: "M1 3h7L4.500 7z", left: "M6 1v7L2 4.500z", right: "M3 1v7l4-3.500z" }[dir];
  return (
    <svg viewBox="0 0 9 9" className="w-2.5 h-2.5"><path d={d} fill="#555" /></svg>
  );
};

const Eye = ({ on }: { on: boolean }) => (
  <svg viewBox="0 0 14 10" className="w-3.5 h-2.5 shrink-0" fill="none">
    {on ? (
      <g>
        <path d="M0 5q7-8 14 0-7 8-14 0z" fill="#eee" stroke="#aaa" strokeWidth="0.800" />
        <circle cx="7" cy="5" r="3.800" fill="#2b95d2" />
        <circle cx="7" cy="5" r="2" fill="#111" />
      </g>
    ) : (
      <path d="M1 3q6 5 12 0M3 6l-1 2M7 6v3M11 6l1 2M1 3q6-4 12 0" stroke="#aaa" />
    )}
  </svg>
);

const pipeline = [
  { name: "WarpByVector4", on: true, child: true },
  { name: "N6cable1104zikuryokumainasu10do.med", on: false, child: false },
  { name: "WarpByVector1", on: true, child: true },
  { name: "N6cable1104zikuryokumainasu30do.med", on: false, child: false },
  { name: "WarpByVector5", on: true, child: true },
];

const PipelineBrowser = () => (
  <section className="shrink-0 border border-[#b4b4b4] bg-white">
    <div className="flex h-[97px]">
      <ul className="flex-1 overflow-hidden">
        {pipeline.map((p, i) => (
          <li key={p.name} className="h-[22px] flex items-center pl-1 first:-mt-3">
            <Eye on={p.on} />
            <svg viewBox="0 0 26 22" className="w-[26px] h-[22px] shrink-0 ml-px" fill="none" stroke="#777">
              {i < 4 && <path d="M17.500 0v22" />}
              {!p.child && <path d="M22 11.500h4" />}
              {!p.child && <path d="M13.500 7.500h8v8h-8z" fill="#fff" />}
              {!p.child && <path d="M15 11.500h5" stroke="#222" />}
            </svg>
            <CubeSmall />
            <span className="pl-1 text-[12px]">{p.name}</span>
          </li>
        ))}
      </ul>
      <div className="w-3.5 border-l border-[#b4b4b4] bg-[#e2e2e2] flex flex-col">
        <button aria-label="Scroll up" className="h-3.5 bg-[#f6f6f6] border-b border-[#b4b4b4] flex items-center justify-center"><Arrow dir="up" /></button>
        <div className="flex-1" />
        <div className="h-[27px] border-t border-[#b4b4b4] bg-[#fafafa]" />
        <button aria-label="Scroll down" className="h-3.5 bg-[#f6f6f6] flex items-center justify-center"><Arrow dir="down" /></button>
      </div>
    </div>
    <div className="h-3.5 border-t border-[#b4b4b4] bg-[#f6f6f6] flex">
      <button aria-label="Scroll left" className="w-3.5 border-r border-[#b4b4b4] flex items-center justify-center"><Arrow dir="left" /></button>
      <div className="flex-1" />
      <div className="w-2 border-x border-[#b4b4b4] bg-[#e2e2e2]" />
      <button aria-label="Scroll right" className="w-3.5 flex items-center justify-center"><Arrow dir="right" /></button>
      <div className="w-3.5 border-l border-[#b4b4b4] bg-[#efefef]" />
    </div>
  </section>
);

const btn = "rounded-[3px] border bg-linear-to-b from-[#fdfdfd] to-[#ebebeb] flex items-center justify-center gap-1";

const Mini = ({ label, dim, children }: { label: string; dim?: boolean; children: React.ReactNode }) => (
  <button
    aria-label={label}
    disabled={dim}
    className={`${btn} w-7 h-6 shrink-0 [&>svg]:w-4 [&>svg]:h-4 ${dim ? "border-[#c8c8c8] opacity-70" : "border-[#b0b0b0]"}`}
  >
    {children}
  </button>
);

const SectionHead = ({ title }: { title: string }) => (
  <div className="flex items-center gap-1">
    <button className="flex-1 min-w-0 h-[26px] border border-[#b4b4b4] flex items-center pl-[11px] pr-[9px]">
      <span className="w-[13px] h-[5px] shrink-0 bg-[#2f8fc6] border border-[#7aa6bf]" />
      <span className="pl-2 font-bold text-[12px] whitespace-nowrap overflow-hidden">{title}</span>
    </button>
    <Mini label="Copy properties">
      <Ico>
        <path d="M9 2h10l4 4v10H9z" fill="#d2d6d0" stroke="#889" />
        <path d="M2 7h10l3 3v12H2z" fill="#d2d6d0" stroke="#889" />
        <path d="M4 12h8M4 15h8M4 18h8M12 6h7" stroke="#889" />
      </Ico>
    </Mini>
    <Mini label="Paste properties" dim>
      <Ico>
        <path d="M8 3h14v16H8z" fill="#aaa" stroke="#999" />
        <path d="M2 7h10l3 3v12H2z" fill="#ddd" stroke="#999" />
        <path d="M4 12h8M4 15h8M4 18h8" stroke="#aaa" />
      </Ico>
    </Mini>
    <Mini label="Restore defaults">
      <Ico>
        <path d="M3 10a9 9 0 0 1 16-4M21 14a9 9 0 0 1-16 4" stroke="#3d8db8" strokeWidth="3" />
        <path d="M22 2v7h-7zM2 22v-7h7z" fill="#3d8db8" />
      </Ico>
    </Mini>
    <Mini label="Save defaults">
      <Ico>
        <path d="M1 16h22v7H1z" fill="#f4f4f4" stroke="#777" />
        <path d="M10 0h4v10h5l-7 8-7-8h5z" fill="#73d216" stroke="#4e9a06" />
      </Ico>
    </Mini>
  </div>
);

const Check = ({ id, on }: { id: string; on?: boolean }) => (
  <span className="relative w-3.5 h-3.5 shrink-0">
    <input id={id} type="checkbox" defaultChecked={on} className="peer block w-3.5 h-3.5 appearance-none border border-[#b8b8b8] bg-white" />
    <svg viewBox="0 0 14 14" className="absolute inset-0 w-3.5 h-3.5 hidden peer-checked:block pointer-events-none">
      <path d="M3 7.500l2.500 3.500Q7 6 11 3" stroke="#222" strokeWidth="2" fill="none" />
    </svg>
  </span>
);

const Point = () => (
  <svg viewBox="0 0 16 16" className="w-4 h-4 shrink-0"><circle cx="8" cy="8" r="2.600" fill="#f4c088" stroke="#4a2d10" /></svg>
);

const Cell = () => (
  <svg viewBox="0 0 16 16" className="w-4 h-4 shrink-0">
    <path d="M1 3l8-2 6 3-1 9-6 3-6-3z" fill="#ee8a1d" stroke="#8a4b08" />
    <path d="M8 5v11M1 3l7 2 7-1" stroke="#8a4b08" fill="none" />
    <path d="M1 3h.1M9 1h.1M15 4h.1M14 13h.1M8 15h.1M2 13h.1M8 6h.1" stroke="#333" strokeWidth="2" strokeLinecap="round" />
  </svg>
);

const MeshGrid = () => (
  <svg viewBox="0 0 16 16" className="w-4 h-4 shrink-0">
    <path d="M1 6l5-4h9v9l-4 5H1z" fill="#555" />
    <path d="M1 9h10M1 12h10M4 6v10M8 6v10M11 6v10M1 6h10l4-4M11 10l4-4M11 14l4-4" stroke="#ccc" fill="none" strokeWidth="0.800" />
  </svg>
);

type Node = { text: string; depth: string; check?: boolean; on?: boolean; leaf?: boolean; icon?: React.ReactNode; italic?: boolean };

const fields: Node[] = [
  { text: "TS0", depth: "pl-1.5" },
  { text: "00000001", depth: "pl-[26px]" },
  { text: "ComSup0", depth: "pl-[46px]", check: true, on: true },
  { text: "unnamed_EFGE_ELNO", depth: "pl-[83px]", check: true, on: true, leaf: true, icon: <Cell /> },
  { text: "resnonlaDEPL", depth: "pl-[83px]", check: true, on: true, leaf: true, icon: <Point /> },
  { text: "unnamed_REAC_NODA", depth: "pl-[83px]", check: true, on: true, leaf: true, icon: <Point /> },
  { text: "TS1", depth: "pl-1.5" },
  { text: "00000001", depth: "pl-[26px]" },
  { text: "ComSup0", depth: "pl-[46px]", check: true },
  { text: "00000001", depth: "pl-[83px]", check: true, leaf: true, icon: <MeshGrid />, italic: true },
];

const FieldTree = () => (
  <div className="ml-[9px] mr-[9px] h-[154px] border border-[#b4b4b4] bg-white flex">
    <ul className="flex-1 overflow-hidden text-[12px]">
      {fields.map((n, i) => (
        <li key={i} className={`flex items-center ${n.leaf ? "h-[18px]" : "h-3.5"} ${n.depth}`}>
          {!n.leaf && <span className="pr-[9px]"><Down /></span>}
          {n.check && <Check id={`field-${i}`} on={n.on} />}
          {n.icon && <span className="pl-1.5">{n.icon}</span>}
          <label htmlFor={`field-${i}`} className={`${n.check ? "pl-1.5" : ""} ${n.italic ? "italic" : ""}`}>{n.text}</label>
        </li>
      ))}
    </ul>
    <div className="w-3.5 border-l border-[#b4b4b4] bg-[#fafafa] flex flex-col">
      <button aria-label="Scroll up" className="h-3.5 border-b border-[#b4b4b4] flex items-center justify-center"><Arrow dir="up" /></button>
      <div className="flex-1" />
      <div className="h-3.5 border-y border-[#b4b4b4] bg-[#e2e2e2]" />
      <button aria-label="Scroll down" className="h-3.5 flex items-center justify-center"><Arrow dir="down" /></button>
    </div>
  </div>
);

const Radio = ({ label, on }: { label: string; on?: boolean }) => (
  <label className="w-[147px] flex items-center gap-1.5 text-[13px]">
    <input
      type="radio"
      name="mode"
      defaultChecked={on}
      className="appearance-none w-3.5 h-3.5 rounded-full border border-[#aaa] bg-white checked:bg-[radial-gradient(#333_3px,#fff_4px)]"
    />
    {label}
  </label>
);

const Inspector = () => {
  const [opacity, setOpacity] = useState("1");
  return (
    <div className="flex-1 min-h-0 flex flex-col pl-[9px] pr-[9px] pt-[9px]">
      <div className="grid grid-cols-4 gap-[3px] shrink-0 text-[#a9a9a9]">
        <button disabled className={`${btn} h-6 border-[#c4c4c4] text-[12px]`}>
          <Ico size="w-3.5 h-3.5"><path d="M1 10l8-3 5 2v10l-6 4-7-3z" fill="#aaa" /><path d="M12 9l4-4-2-3h9v9l-3-3-5 5z" fill="#bbb" /></Ico>
          適用
        </button>
        <button disabled className={`${btn} h-6 border-[#c4c4c4] text-[13px]`}>
          <Ico size="w-3.5 h-3.5"><circle cx="12" cy="12" r="10" stroke="#999" strokeWidth="4" /><path d="M5 5l14 14" stroke="#999" strokeWidth="4" /></Ico>
          Reset
        </button>
        <button disabled className={`${btn} h-6 border-[#c4c4c4] text-[13px]`}>
          <Ico size="w-2.5 h-2.5"><path d="M3 3l18 18M21 3L3 21" stroke="#888" strokeWidth="8" /></Ico>
          Delete
        </button>
        <button aria-label="Help" className={`${btn} h-6 border-[#a8a8a8] text-[18px] font-bold text-[#7fae62]`}>?</button>
      </div>
      <div className="flex gap-[3px] mt-[5px] shrink-0">
        <input aria-label="Search" placeholder="Search ... (use Esc to clear text)" className="flex-1 min-w-0 h-[22px] rounded-[3px] border border-[#a4a4a4] bg-white pl-[3px] text-[13px] placeholder:text-[#808080]" />
        <button aria-label="Advanced" className={`${btn} w-6 h-[23px] border-[#b8b8b8]`}>
          <Ico size="w-3.5 h-3.5">
            <circle cx="12" cy="12" r="9" stroke="#aaa" strokeWidth="5" strokeDasharray="4 3" />
            <circle cx="12" cy="12" r="6" stroke="#aaa" strokeWidth="5" fill="#eee" />
          </Ico>
        </button>
      </div>
      <div className="flex mt-1.5 flex-1 min-h-0">
        <div className="flex-1 min-w-0 overflow-hidden">
          <SectionHead title="Properties (N6cable1104zikuryoku)" />
          <div className="flex justify-end pr-[9px] mt-[15px] mb-[22px]">
            <Mini label="Reload">
              <Ico>
                <path d="M2 12L5 1l3 3q6-4 10 1l2 5q-6-4-9-1l2 3z" fill="#2b4fd6" />
                <path d="M22 13l-3 10-3-3q-6 4-10-2l-1-4q6 4 9 1l-2-3z" fill="#34a7e8" />
              </Ico>
            </Mini>
          </div>
          <FieldTree />
          <div className="ml-2.5 mr-[9px] mt-4 h-[27px] rounded-sm border border-[#d0d0d0] bg-[#ebebeb] flex items-center pl-2.5 text-[13px]">
            <Check id="vectors" on />
            <label htmlFor="vectors" className="pl-1.5">GenerateVectors</label>
          </div>
          <div className="ml-2.5 mr-[9px] mt-[17px] mb-[15px] h-[43px] rounded-sm border border-[#d0d0d0] bg-[#ebebeb] flex items-center pl-2.5">
            <Radio label="Time" on />
            <Radio label="Mode" />
          </div>
          <SectionHead title="Display (UnstructuredGridRepresentation)" />
          <div className="flex mt-1.5">
            <span className="w-[100px] shrink-0 text-[12px] leading-4">Representation</span>
            <Combo label="Display representation" value="Surface" width="flex-1" pad="pl-1" />
          </div>
          <h3 className="mt-1 font-bold text-[13px] leading-4 border-b border-[#999]">Coloring</h3>
          <div className="flex gap-1 mt-1.5">
            <Combo label="Color by" value="Solid Color" width="w-[187px]" icon={<Dot />} />
            <Combo label="Color component" value="" width="w-[107px]" dim />
          </div>
          <div className="flex gap-1 mt-1">
            <button className={`${btn} h-6 flex-1 border-[#a8a8a8] text-[12px] [&>svg]:w-4 [&>svg]:h-4`}><Legend />編集</button>
            <Mini label="Edit" dim><Legend grey /></Mini>
            <Mini label="Rescale" dim><Ruler grey /></Mini>
            <Mini label="Rescale custom" dim><Ruler grey mark="c" /></Mini>
            <Mini label="Rescale time" dim><Ruler grey mark="t" /></Mini>
            <Mini label="Presets" dim>
              <Ico><path d="M1 3h8l2 3h12v13H1z" fill="#bbb" stroke="#999" /><path d="M13 22l-7-8q2-5 7-1 5-4 7 1z" fill="#777" /></Ico>
            </Mini>
            <Mini label="Scheme" dim><Scheme /></Mini>
            <Mini label="Edit scheme" dim>
              <Ico><path d="M2 0h14v22H2z" fill="#999" /><text x="8" y="24" fontSize="22" fontWeight="bold" fill="#222">e</text></Ico>
            </Mini>
          </div>
          <h3 className="mt-[7px] font-bold text-[13px] leading-4 border-b border-[#999]">Styling</h3>
          <div className="flex mt-[5px]">
            <label htmlFor="opacity" className="w-[100px] shrink-0 text-[13px] leading-4">Opacity</label>
            <input
              id="opacity"
              type="range"
              min="0"
              max="1"
              step="0.01"
              value={opacity}
              onChange={(e) => setOpacity(e.target.value)}
              className="w-[111px] h-[22px] appearance-none bg-transparent [&::-webkit-slider-runnable-track]:h-[5px] [&::-webkit-slider-runnable-track]:rounded-sm [&::-webkit-slider-runnable-track]:bg-[#3f9de0] [&::-webkit-slider-runnable-track]:border [&::-webkit-slider-runnable-track]:border-[#2c6c9c] [&::-webkit-slider-thumb]:appearance-none [&::-webkit-slider-thumb]:w-[13px] [&::-webkit-slider-thumb]:h-[13px] [&::-webkit-slider-thumb]:-mt-[5px] [&::-webkit-slider-thumb]:rounded-[3px] [&::-webkit-slider-thumb]:border [&::-webkit-slider-thumb]:border-[#a0a0a0] [&::-webkit-slider-thumb]:bg-white"
            />
            <input aria-label="Opacity value" value={opacity} onChange={(e) => setOpacity(e.target.value)} className="ml-[7px] flex-1 min-w-0 h-[22px] rounded-[3px] border border-[#a4a4a4] bg-white pl-[3px] text-[13px]" />
          </div>
          <h3 className="mt-1.5 font-bold text-[13px] leading-4">Lighting</h3>
        </div>
        <div className="w-3.5 shrink-0 border-l border-[#b4b4b4] bg-[#e2e2e2] flex flex-col">
          <button aria-label="Scroll up" className="h-3.5 bg-[#fafafa] border-b border-[#b4b4b4] flex items-center justify-center"><Arrow dir="up" /></button>
          <div className="flex-[57] bg-[#fafafa] border-b border-[#b4b4b4]" />
          <div className="flex-[43]" />
          <button aria-label="Scroll down" className="h-3.5 bg-[#fafafa] border-t border-[#b4b4b4] flex items-center justify-center"><Arrow dir="down" /></button>
        </div>
      </div>
    </div>
  );
};

const LeftDock = () => (
  <aside className="w-[361px] shrink-0 flex flex-col pt-px">
    <DockTitle>パイプのブラウザー</DockTitle>
    <PipelineBrowser />
    <div className="h-1.5 shrink-0 flex items-center justify-center"><div className="w-[17px] border-t border-dotted border-[#999]" /></div>
    <div className="flex items-end border-b border-[#b4b4b4] shrink-0 text-[12px]">
      <button className="w-[187px] h-[25px] rounded-t-[3px] border border-b-0 border-[#b4b4b4] bg-linear-to-b from-[#fafafa] to-[#efefef]">オブジェクト インスペクター</button>
      <button className="w-[47px] h-[23px] rounded-tr-[3px] border border-b-0 border-l-0 border-[#b4b4b4] bg-[#dcdcdc]">情報</button>
    </div>
    <div className="h-px shrink-0" />
    <DockTitle>オブジェクト インスペクター</DockTitle>
    <Inspector />
    <div className="h-2 shrink-0" />
  </aside>
);

/* ---------- 3D view ---------- */

const ViewTools = () => (
  <div className="h-[27px] shrink-0 flex items-center">
    <div className="flex-1 flex items-center [&>svg]:mx-1 [&>i]:ml-0.5 [&>i]:mr-[3px]">
      <Ico size="w-[18px] h-[18px]"><CamBody /><path d="M1 24l1-11 3 3q6-5 12-1 4 4 0 9l-4-2q2-3-1-5-3-1-4 2l2 2z" fill="#ee2222" /></Ico>
      <Ico size="w-[18px] h-[18px]"><CamBody grey /><path d="M5 23l3-8 8 3 4 5" stroke="#b5b5b5" strokeWidth="2" /></Ico>
      <i className="w-px h-4 bg-[#cfcfcf]" />
      <Ico size="w-[18px] h-[18px]"><g transform="translate(2 2) scale(.85)"><CamBody /></g><path d="M0 5V0h5M19 0h5v5M0 19v5h5M24 19v5h-5" stroke="#888" strokeWidth="1.500" /></Ico>
      <i className="w-px h-4 bg-[#cfcfcf]" />
      <button className="w-[26px] text-center text-[10px] font-bold text-[#6b6b55]">2D</button>
      <Ico size="w-[18px] h-[18px]"><CamBody /><circle cx="12" cy="12" r="6" fill="#cfe8f8" stroke="#888" strokeWidth="1.500" /><path d="M15 15l7 7" stroke="#c79a2b" strokeWidth="4" /></Ico>
      <i className="w-px h-4 bg-[#cfcfcf]" />
      <Sel><path d="M12 6v12M6 12h12" stroke={S} strokeWidth="5" /><path d="M12 7v10M7 12h10" stroke={G} strokeWidth="3.500" /></Sel>
      <Sel><path d="M6 12h12" stroke="#e22" strokeWidth="5" /></Sel>
      <Sel><path d="M10 3v9M5 7.500h10" stroke="#7fae62" strokeWidth="3.500" /><path d="M5 17h10" stroke="#e22" strokeWidth="4" /><Pick /></Sel>
      <i className="w-px h-4 bg-[#cfcfcf]" />
      <Sel><path d="M12 5l7 12H5z" fill={G} stroke={S} /><Pick /></Sel>
      <Sel><path d="M12 6l7 12H5z" stroke="#bbb" /><circle cx="12" cy="5" r="2" fill="#b33" /><circle cx="5" cy="18" r="2" fill="#b33" /><Pick /></Sel>
      <Sel><path d="M3 8l10-6 9 3v6l-9 4H3z" fill="#8cc869" stroke={S} /><path d="M3 8l10 1 9-4" stroke={S} /><Pick /></Sel>
      <Sel><path d="M3 8l8-4h10M3 18V8h10v10z" stroke="#ccc" /><path d="M3 8h.1M12 4h.1M21 4h.1M13 8h.1M3 18h.1M8 14h.1M15 14h.1" stroke="#d44" strokeWidth="2.500" strokeLinecap="round" /><Pick /></Sel>
      <Sel><path d="M13 7v10L5 13z" fill={G} stroke={S} /><Pick /></Sel>
      <Sel><path d="M7 7h.1M13 6h.1M18 8h.1M6 13h.1M12 12h.1M9 18h.1" stroke="#b54b3c" strokeWidth="3.500" strokeLinecap="round" /><Pick /></Sel>
      <Sel><circle cx="7" cy="7" r="3" fill="#2a8fd0" /><circle cx="7" cy="17" r="3" fill="#2a8fd0" /><circle cx="16" cy="13" r="4" fill={G} stroke={S} /><Pick /></Sel>
      <Sel bare><path d="M2 9l8-7h11v12l-5 7H2z" fill="#d6d6d6" stroke="#aaa" /><path d="M2 9h13v12M15 9l6-7" stroke="#aaa" /><Pick /></Sel>
      <Sel bare><circle cx="9" cy="11" r="3.500" fill="#d0d0d0" stroke="#aaa" /><Pick /></Sel>
      <Sel bare><path d="M11 5l8 13H3z" fill={G} stroke={S} /><Pick /></Sel>
      <Sel bare><path d="M11 5l7 13H4z" stroke="#ccc" /><circle cx="11" cy="4" r="2.200" fill="#b33" /><circle cx="4" cy="18" r="2.200" fill="#d33" /><Pick /></Sel>
      <Sel bare><path d="M8 11l7 12H1z" fill={G} stroke={S} /><path d="M13 5q3-4 7-2 3 3-1 6-3 2-2 5M17 17v2" stroke="#77775c" strokeWidth="2" /></Sel>
      <Sel bare><circle cx="6" cy="18" r="4" fill="#e03a2a" /><path d="M12 5q3-4 7-2 3 3-1 6-3 2-2 5M16 17v2" stroke="#77775c" strokeWidth="2" /></Sel>
      <Sel bare><path d="M12 2v20M2 12h20" stroke="#2a6f9c" strokeWidth="7" /><path d="M12 3v18M3 12h18" stroke="#2a94d4" strokeWidth="5.500" /></Sel>
      <Sel bare><path d="M2 12h20" stroke="#a8a8a8" strokeWidth="7" /></Sel>
      <Sel bare><circle cx="12" cy="12" r="10" fill="#fff" stroke="#dd1c1c" strokeWidth="4" /><path d="M8 8l8 8M16 8l-8 8" stroke="#444" strokeWidth="4" /></Sel>
    </div>
    <a href="#view" className="font-bold underline text-[12px] mr-3">RenderView1</a>
    <button aria-label="Float view" className={`${btn} w-[26px] h-[25px] border-[#b8b8b8]`}><Float /></button>
  </div>
);

const Scene = () => (
  <svg viewBox="375 268 1537 724" preserveAspectRatio="xMidYMid slice" className="w-full h-full block" fill="none">
    <path d="M688 925Q1124 634 1555 319" stroke="#b9bcc8" />
    <path d="M688 925Q1124 655 1555 319Q1124 674 688 925z" fill="#a9acb8" />
    <path d="M688 925Q1124 661 1555 319Q1124 667 688 925z" fill="#fff" stroke="#fff" strokeWidth="0.600" />
    <path d="M1096 653h5v5h-5zM1125 633h5v5h-5zM1154 613h5v5h-5zM1183 592h5v5h-5z" fill="#f0f" />
    <path d="M1097.500 592v15l4-4 3 7 3-1-3-7h5z" fill="#222" stroke="#fff" />
    <path d="M465.500 901v-45" stroke="#d8d800" />
    <path d="M465.500 851l3 11h-6z" fill="#e6e600" />
    <path d="M465 901.500h42" stroke="#c00" />
    <path d="M505 898l11 3.500-11 3.500z" fill="#e00" />
    <circle cx="465.500" cy="901.500" r="3.500" fill="#063" stroke="#0f0" strokeWidth="2.500" />
    <g fill="#fff" fontSize="14" fontFamily="Liberation Sans, Arial, sans-serif">
      <text x="468" y="862">Y</text>
      <text x="468" y="901">Z</text>
      <text x="508" y="902">X</text>
    </g>
  </svg>
);

const Viewer = () => (
  <main className="flex-1 min-w-0 flex flex-col border-t-2 border-l-2 border-[#a0a0a0] pl-px pt-px pr-1">
    <div className="flex shrink-0">
      <div className="flex-1 h-[26px] rounded-t-[3px] border border-b-0 border-[#b0b0b0] bg-linear-to-b from-[#fafafa] to-[#efefef] flex items-center justify-center pb-0.5">
        <span className="text-[13px] text-[#2a86c8]">
          ParaView <span className="text-[12px]">シーン</span>:1 - <span className="text-[12px]">ビューア</span>:1
        </span>
      </div>
      <button aria-label="Close viewer" className={`${btn} w-[17px] h-[17px] ml-1.5 mt-1 border-[#b8b8b8]`}><Close /></button>
    </div>
    <div className="flex items-end shrink-0">
      <div className="w-[123px] h-[27px] rounded-t-[3px] border border-b-0 border-[#b0b0b0] bg-[#fcfcfc] flex items-center pl-[11px] text-[12px]">
        <svg viewBox="0 0 16 16" className="w-4 h-4 shrink-0" fill="#fff" stroke="#333"><path d="M.5 3.500h15v12H.500z" /><path d="M0 0h16v5H0z" fill="#333" /></svg>
        <button className="pl-1 pr-1 whitespace-nowrap">Layout #1</button>
        <button aria-label="Close layout"><Close /></button>
      </div>
      <button className="w-[33px] h-[25px] rounded-tr-[3px] border border-l-0 border-[#b0b0b0] bg-[#e8e8e8] text-[13px]">+</button>
      <div className="flex-1 border-b border-[#b0b0b0]" />
    </div>
    <div className="flex-1 min-h-0 flex flex-col border-r border-[#b0b0b0] pl-0.5">
      <ViewTools />
      <div id="view" className="flex-1 min-h-0 border-2 border-[#00f] bg-white p-px">
        <div className="w-full h-full bg-[#52576e]"><Scene /></div>
      </div>
    </div>
    <div className="h-1 shrink-0 bg-white" />
  </main>
);

export default function App() {
  return (
    <div className="relative h-screen overflow-hidden flex flex-col bg-[#efefef] text-black text-[13px] font-['DejaVu_Sans','Noto_Sans_CJK_JP',sans-serif]">
      <TitleBar />
      <MenuBar />
      <FileBar />
      <ViewBar />
      <FilterBar />
      <div className="flex-1 min-h-0 flex pt-px">
        <LeftDock />
        <div className="w-1.5 shrink-0 flex items-center justify-center">
          <div className="h-[17px] border-l border-dotted border-[#999]" />
        </div>
        <Viewer />
      </div>
      <footer className="h-6 shrink-0 flex items-center justify-end pr-2">
        <button aria-label="Clear" className={`${btn} w-3.5 h-3.5 border-[#b8b8b8]`}>
          <Ico size="w-2 h-2"><path d="M3 3l18 18M21 3L3 21" stroke="#666" strokeWidth="6" /></Ico>
        </button>
      </footer>
      <Popup />
    </div>
  );
}
